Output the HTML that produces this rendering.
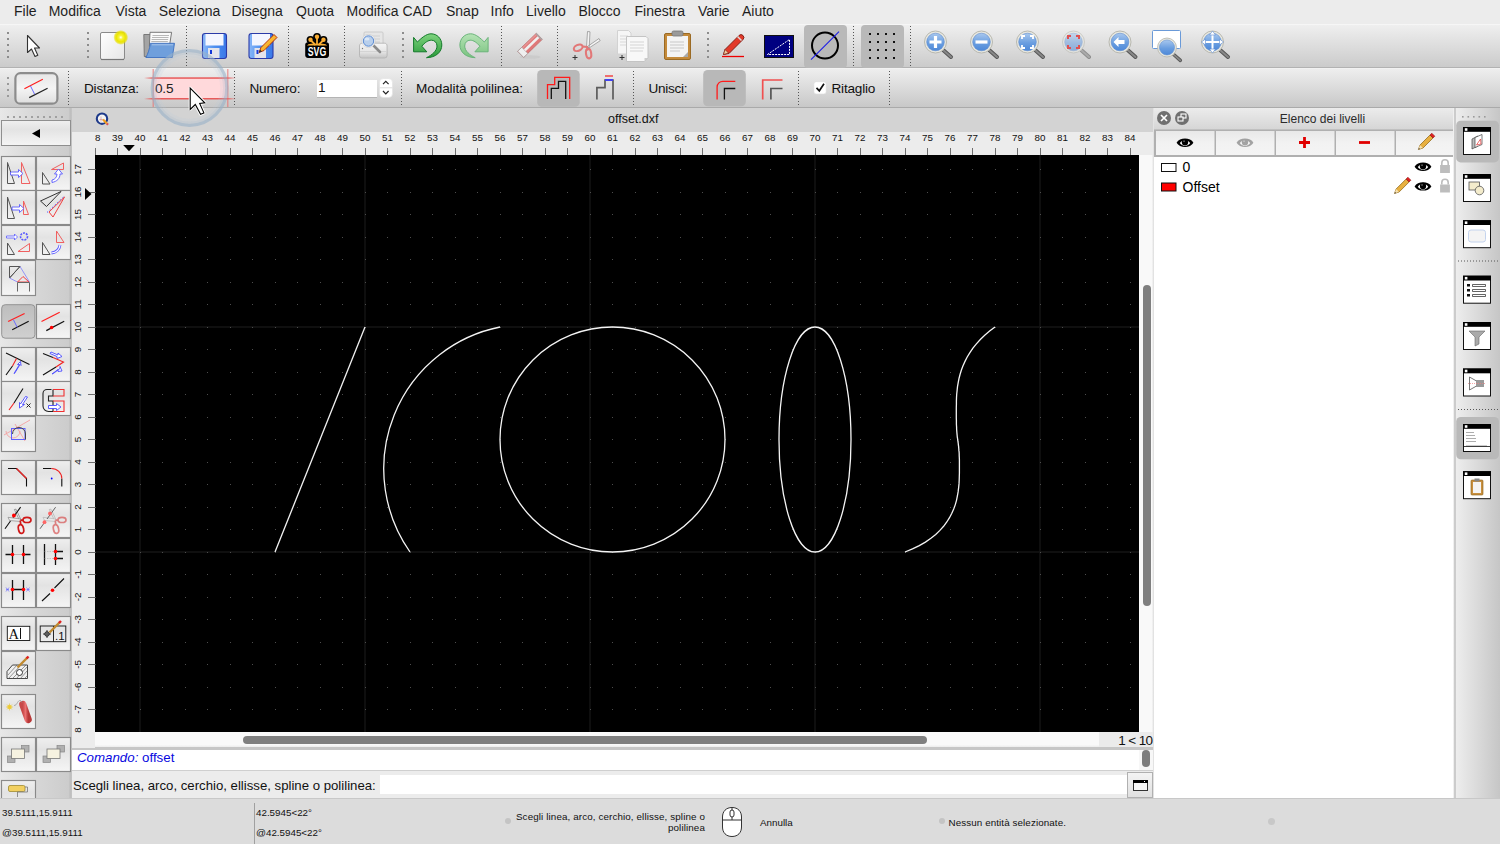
<!DOCTYPE html>
<html><head><meta charset="utf-8"><style>
*{box-sizing:border-box;margin:0;padding:0}
html,body{width:1500px;height:844px;overflow:hidden;white-space:nowrap;background:#dcdcdc;font-family:"Liberation Sans",sans-serif;color:#1a1a1a}
.abs{position:absolute}
svg{display:block}
#menubar{left:0;top:0;width:1500px;height:24px;background:#ececec;font-size:14px;color:#1e1e1e}
#menubar span{position:absolute;top:3px}
#tb1{left:0;top:24px;width:1500px;height:44px;background:linear-gradient(#efefef,#cbcbcb);border-top:1px solid #f6f6f6;border-bottom:1px solid #b2b2b2}
#tb2{left:0;top:68px;width:1500px;height:40px;background:linear-gradient(#eeeeee,#c8c8c8);border-top:1px solid #f2f2f2;border-bottom:1px solid #aaaaaa;font-size:14px}
#toolbox{left:0;top:108px;width:72px;height:690px;background:linear-gradient(90deg,#e8e8e8 0,#d8d8d8 45%,#cccccc 96%,#bdbdbd 97%,#c4c4c4 100%)}
#doctitle{left:72px;top:108px;width:1081px;height:24px;background:#d3d3d3;font-size:12px;text-align:center;line-height:23px;color:#222}
#rulerT{left:72px;top:132px;width:1081px;height:23px;background:#ececec}
#rulerL{left:72px;top:155px;width:23px;height:593px;z-index:2;background:#ececec}
#canvas{left:95px;top:155px;width:1044px;height:577px;background:#000}
#vscroll{left:1139px;top:155px;width:16px;height:577px;background:linear-gradient(90deg,#f9f9f9 0,#f9f9f9 13px,#e6e6e6 14px,#cfcfcf 16px)}
#hscroll{left:72px;top:732px;width:1081px;height:15px;background:linear-gradient(#f9f9f9 85%,#ececec)}
#cmdhist{left:72px;top:747px;width:1081px;height:24px;background:#fff;border-top:3px solid #c6c6c6;border-bottom:1px solid #cfcfcf}
#cmdline{left:72px;top:771px;width:1081px;height:27px;background:#ececec}
#layers{left:1155px;top:108px;width:298px;height:690px;background:#fff}
#dock{left:1453px;top:108px;width:47px;height:690px;background:linear-gradient(90deg,#ececec,#d0d0d0)}
#status{left:0;top:798px;width:1500px;height:46px;background:#dcdcdc;border-top:1px solid #c8c8c8}

</style></head><body>
<div id="menubar" class="abs"><span style="left:14px">File</span><span style="left:48.7px">Modifica</span><span style="left:115.5px">Vista</span><span style="left:158.8px">Seleziona</span><span style="left:231.5px">Disegna</span><span style="left:296px">Quota</span><span style="left:346.5px">Modifica CAD</span><span style="left:446px">Snap</span><span style="left:490.5px">Info</span><span style="left:526px">Livello</span><span style="left:578.5px">Blocco</span><span style="left:634.5px">Finestra</span><span style="left:698px">Varie</span><span style="left:742px">Aiuto</span></div>
<div id="tb1" class="abs"><svg width="1500" height="47" viewBox="0 22 1500 47" style="position:absolute;left:0;top:-3px">
<defs>
<linearGradient id="gBlue" x1="0" y1="0" x2="1" y2="0"><stop offset="0" stop-color="#8ab8f8"/><stop offset=".5" stop-color="#4d8ff0"/><stop offset="1" stop-color="#3a78e8"/></linearGradient>
<linearGradient id="gLens" x1="0" y1="0" x2="0" y2="1"><stop offset="0" stop-color="#a9c8ee"/><stop offset=".55" stop-color="#6a9ee0"/><stop offset="1" stop-color="#4d88d8"/></linearGradient>
<linearGradient id="gPage" x1="0" y1="0" x2="1" y2="1"><stop offset="0" stop-color="#ffffff"/><stop offset="1" stop-color="#e6e6e6"/></linearGradient>
<radialGradient id="gSun"><stop offset="0" stop-color="#ffffff"/><stop offset=".25" stop-color="#f8f440"/><stop offset=".6" stop-color="#ece600"/><stop offset=".8" stop-color="#e8e000" stop-opacity=".75"/><stop offset="1" stop-color="#e8e000" stop-opacity="0"/></radialGradient>
<linearGradient id="gGreen" x1="0" y1="0" x2="0" y2="1"><stop offset="0" stop-color="#7fd47f"/><stop offset="1" stop-color="#2a9a3a"/></linearGradient>
<linearGradient id="gGreenL" x1="0" y1="0" x2="0" y2="1"><stop offset="0" stop-color="#b6e3b6"/><stop offset="1" stop-color="#78c27e"/></linearGradient>
<linearGradient id="gPencil" x1="0" y1="0" x2="1" y2="1"><stop offset="0" stop-color="#ffe060"/><stop offset="1" stop-color="#f08a00"/></linearGradient>
</defs>
<!-- handles -->
<g fill="#8c8c8c"><rect x="7" y="32" width="2" height="2"/><rect x="7" y="38" width="2" height="2"/><rect x="7" y="44" width="2" height="2"/><rect x="7" y="50" width="2" height="2"/><rect x="7" y="56" width="2" height="2"/>
<rect x="87" y="32" width="2" height="2"/><rect x="87" y="38" width="2" height="2"/><rect x="87" y="44" width="2" height="2"/><rect x="87" y="50" width="2" height="2"/><rect x="87" y="56" width="2" height="2"/>
<rect x="402" y="32" width="2" height="2"/><rect x="402" y="38" width="2" height="2"/><rect x="402" y="44" width="2" height="2"/><rect x="402" y="50" width="2" height="2"/><rect x="402" y="56" width="2" height="2"/>
<rect x="707" y="32" width="2" height="2"/><rect x="707" y="38" width="2" height="2"/><rect x="707" y="44" width="2" height="2"/><rect x="707" y="50" width="2" height="2"/><rect x="707" y="56" width="2" height="2"/></g>
<!-- separators -->
<g stroke="#555" stroke-width="1" stroke-dasharray="1 2"><path d="M186.5 26V66M288.5 26V66M344.5 26V66M557.5 26V66M501.5 26V66M853.5 26V66M910.5 26V66"/></g>
<!-- arrow -->
<path d="M27.5 35.5V52.5L31.5 49L35 56.5L37.8 55.2L34.5 48H39.5Z" fill="#fff" stroke="#333" stroke-width="1.1" stroke-linejoin="round"/>
<!-- new doc -->
<rect x="100.5" y="32.5" width="24" height="27" rx="1.5" fill="url(#gPage)" stroke="#8a8a8a"/>
<path d="M101 59.5h23" stroke="#777" stroke-width="1.2"/>
<circle cx="120.8" cy="37.4" r="7.5" fill="url(#gSun)"/>
<!-- open folder -->
<path d="M143.8 34.5h6l1 1.5v20.5h-6.5z" fill="#a4a4a4" stroke="#707070" stroke-width=".9"/>
<path d="M150 32.3h21.6l-2.2 14h-20z" fill="#fafafa" stroke="#6a6a6a" stroke-width=".9"/>
<path d="M152.5 35.5h16.5M152 37.5h16.5M151.6 39.5h16.5M151.3 41.5h16.5" stroke="#b8b8b8" stroke-width="1.1"/>
<path d="M150.5 43.3h24l-2.2 14.2h-26.5c2-3 3.8-9 4.7-14.2z" fill="#6f9fdc" stroke="#3d6fbf" stroke-width=".9"/>
<path d="M152 44.8h21" stroke="#a8c6ec" stroke-width="1"/>
<!-- save -->
<g id="floppy"><rect x="202.5" y="33.5" width="24" height="25" rx="2.5" fill="url(#gBlue)" stroke="#2b3aa8" stroke-width="1.1"/>
<rect x="205.5" y="34" width="18" height="11.5" fill="#f4f6ff"/>
<rect x="208" y="48" width="11.5" height="10" fill="#e4e4ec"/>
<rect x="210" y="50" width="2" height="4" fill="#1438d8"/></g>
<!-- save as -->
<use href="#floppy" x="46.5"/>
<path d="M259 52.5l2-5 13-13 3 3-13 13z" fill="url(#gPencil)" stroke="#b02000" stroke-width=".9"/>
<path d="M259 52.5l1-3 2 2z" fill="#333"/>
<!-- SVG logo -->
<g><rect x="305.2" y="42.3" width="23.8" height="15.6" rx="2.8" fill="#000"/>
<circle cx="317" cy="36.8" r="3.9" fill="#000"/><circle cx="310.5" cy="39.8" r="3.9" fill="#000"/><circle cx="323.5" cy="39.8" r="3.9" fill="#000"/>
<path d="M317 37v7M310.5 40l5 5M323.5 40l-5 5" stroke="#000" stroke-width="5"/>
<path d="M317 37v7.5M310.5 40l5 5M323.5 40l-5 5" stroke="#f9ad33" stroke-width="1.8"/>
<circle cx="317" cy="36.8" r="2.2" fill="#f9ad33"/><circle cx="310.5" cy="39.8" r="2.2" fill="#f9ad33"/><circle cx="323.5" cy="39.8" r="2.2" fill="#f9ad33"/>
<path d="M307 45.6Q308 43.6 312 43.8H322Q326 43.6 327.2 45.6Z" fill="#f9ad33"/>
<text x="317" y="56.2" font-family="Liberation Sans" font-weight="bold" font-size="12" fill="#fff" text-anchor="middle" textLength="18.5" lengthAdjust="spacingAndGlyphs">SVG</text></g>
<!-- print preview -->
<rect x="364" y="32" width="19" height="14" rx="1" fill="#e6e6e6" stroke="#c4c4c4" stroke-width=".8"/>
<path d="M367 36h13M367 39h13M367 42h13" stroke="#d0d0d0"/>
<defs><linearGradient id="gPrn" x1="0" y1="0" x2="0" y2="1"><stop offset="0" stop-color="#f6f6f6"/><stop offset=".6" stop-color="#e4e4e4"/><stop offset="1" stop-color="#c4c4c4"/></linearGradient></defs>
<path d="M359.5 46c0-1.8 1-2.8 2.8-2.8h22c1.8 0 2.8 1 2.8 2.8v9.5a2.5 2.5 0 0 1-2.5 2.5h-22.6a2.5 2.5 0 0 1-2.5-2.5z" fill="url(#gPrn)" stroke="#b4b4b4" stroke-width=".9"/>
<path d="M360 51.5h26.5" stroke="#cfcfcf" stroke-width=".8"/><circle cx="362.5" cy="48.5" r=".7" fill="#777"/>
<path d="M373.5 45.5l6.5 6.5" stroke="#8a8a8a" stroke-width="2.6" stroke-linecap="round"/>
<circle cx="368.5" cy="41" r="6.6" fill="#f8f8f8" stroke="#c8c8c8" stroke-width=".6"/>
<circle cx="368.5" cy="41" r="5.2" fill="#b8cfec" stroke="#5a8ad2" stroke-width="1"/>
<ellipse cx="367" cy="39" rx="2.5" ry="1.6" fill="#e4eefa" opacity=".8"/>
<!-- undo -->
<path d="M413.6 37.4L417.4 42C421 38.5 426 33.8 431 33.8C437 33.8 441.8 38.5 441.8 45C441.8 52 436 57.5 426.5 57.7C432 55 437 51 437 46C437 42.5 434.5 40.2 431.5 40.2C428 40.2 425 42.5 421.8 46.2L426.8 51.8L413.6 51.8Z" fill="url(#gGreen)" stroke="#137a2a" stroke-width="1"/>
<!-- redo -->
<path d="M413.6 37.4L417.4 42C421 38.5 426 33.8 431 33.8C437 33.8 441.8 38.5 441.8 45C441.8 52 436 57.5 426.5 57.7C432 55 437 51 437 46C437 42.5 434.5 40.2 431.5 40.2C428 40.2 425 42.5 421.8 46.2L426.8 51.8L413.6 51.8Z" fill="url(#gGreenL)" stroke="#6ab47a" stroke-width="1" transform="translate(901.7 0) scale(-1 1)"/>
<!-- eraser -->
<ellipse cx="530" cy="57" rx="10.5" ry="1.8" fill="#c8c8c8" opacity=".7"/>
<g transform="translate(530 45.3) rotate(-44)">
<rect x="-13" y="-4.3" width="26" height="8.6" fill="#e07878" stroke="#b86060" stroke-width=".6"/>
<rect x="-13" y="-4.3" width="5.8" height="8.6" fill="#efefef" stroke="#999" stroke-width=".6"/>
<rect x="-7.2" y="-1.3" width="19" height="2.6" fill="#f0f0f0"/>
<rect x="-7.2" y="-4" width="19" height="1.5" fill="#eaa0a0" opacity=".7"/>
<rect x="11.8" y="-4.3" width="1.4" height="8.6" fill="#a8a8a8"/>
</g>
<!-- cut -->
<path d="M586.5 47.5L587.5 31.5l2.5.3-.8 15.5zM587.5 46.5l11.5-8 1.2 2.2-11.5 7.5z" fill="#f4f4f4" stroke="#8a8a8a" stroke-width=".7"/>
<ellipse cx="578.2" cy="47.8" rx="4.6" ry="2.9" fill="none" stroke="#e27878" stroke-width="2.1" transform="rotate(-25 578.2 47.8)"/>
<ellipse cx="588.6" cy="53.6" rx="2.6" ry="4.8" fill="none" stroke="#e27878" stroke-width="2.1" transform="rotate(-8 588.6 53.6)"/>
<path d="M582.5 46.5l4.5.5.8 3.5" stroke="#e27878" stroke-width="2" fill="none"/>
<path d="M572.5 57.5h5M575 55v5" stroke="#333" stroke-width="1"/>
<!-- copy -->
<path d="M617.5 30.5h11l2.5 2.5v21h-13.5z" fill="#f6f6f6" stroke="#d2d2d2"/>
<path d="M620 36h8M620 39h8M620 42h8M620 45h8" stroke="#d8d8d8"/>
<path d="M626.5 36.5h19.5l2 2v19.5l-3.5 3.5h-18z" fill="#f8f8f8" stroke="#c4c4c4"/>
<path d="M630 42h14M630 45h14M630 48h14M630 51h13" stroke="#d4d4d4"/>
<path d="M644.5 61.5v-3.5h3.5z" fill="#ccc"/>
<path d="M619.5 57.5h5M622 55v5" stroke="#333" stroke-width="1"/>
<!-- paste -->
<rect x="664.5" y="33.5" width="26" height="26" rx="1.5" fill="#c48a3a" stroke="#9a6a24"/>
<rect x="667" y="36" width="21" height="21" fill="#f4f4f4"/>
<path d="M670 42h14M670 45h14M670 48h14M670 51h10" stroke="#c8c8c8"/>
<path d="M683 57l5-5v5z" fill="#aaa"/>
<rect x="672" y="31" width="11" height="5" rx="1.5" fill="#9a9a9a" stroke="#777" stroke-width=".8"/>
<!-- pencil -->
<path d="M722 56.5h22" stroke="#e00" stroke-width="1.3"/>
<path d="M723.5 54.5l1.5-5 14-14a2.5 2.5 0 0 1 4 4l-14 14z" fill="#e23a2a" stroke="#7a1a10" stroke-width=".9"/>
<path d="M737.5 36.5l4 4" stroke="#ddd" stroke-width="1.5"/>
<path d="M723.5 54.5l1.5-5 3.5 3.5z" fill="#f0d0a0" stroke="#7a1a10" stroke-width=".6"/>
<!-- blue box -->
<rect x="764.5" y="35.5" width="29" height="22" fill="#000080" stroke="#111"/>
<path d="M767.5 54.5L789.5 39.5V54.5Z" fill="none" stroke="#fff" stroke-width="1" stroke-dasharray="2 1"/>
<!-- selected circle btn -->
<rect x="804" y="25" width="43" height="43" rx="4" fill="#b9b9b9"/>
<circle cx="825" cy="45.6" r="13" fill="none" stroke="#000" stroke-width="2"/>
<path d="M811 59.6L839 31.6" stroke="#1b1be8" stroke-width="1.1"/>
<!-- grid btn -->
<rect x="861" y="25" width="43" height="43" rx="4" fill="#b9b9b9"/>
<g fill="#111"><rect x="869" y="33" width="2" height="2"/><rect x="877" y="33" width="2" height="2"/><rect x="885" y="33" width="2" height="2"/><rect x="893" y="33" width="2" height="2"/><rect x="869" y="41" width="2" height="2"/><rect x="877" y="41" width="2" height="2"/><rect x="885" y="41" width="2" height="2"/><rect x="893" y="41" width="2" height="2"/><rect x="869" y="49" width="2" height="2"/><rect x="877" y="49" width="2" height="2"/><rect x="885" y="49" width="2" height="2"/><rect x="893" y="49" width="2" height="2"/><rect x="869" y="57" width="2" height="2"/><rect x="877" y="57" width="2" height="2"/><rect x="885" y="57" width="2" height="2"/><rect x="893" y="57" width="2" height="2"/></g>
<!-- zoom icons -->
<g id="zlens"><path d="M942 49l9 8" stroke="#555" stroke-width="4" stroke-linecap="round"/><path d="M942 49l9 8" stroke="#888" stroke-width="2" stroke-linecap="round"/>
<circle cx="935.5" cy="42" r="11" fill="#e8e8e0" stroke="#b8b8b0" stroke-width="1"/><circle cx="935.5" cy="42" r="8.8" fill="url(#gLens)" stroke="#5a8ad0" stroke-width=".6"/></g>
<path d="M935.5 36v12M929.5 42h12" stroke="#fff" stroke-width="3.2"/>
<use href="#zlens" x="46"/>
<path d="M975.5 42h12" stroke="#fff" stroke-width="3.2"/>
<use href="#zlens" x="92"/>
<path d="M1022 39v-3h3M1030 36h3v3M1033 45v3h-3M1025 48h-3v-3" stroke="#fff" stroke-width="1.8" fill="none"/>
<g opacity=".55"><use href="#zlens" x="138"/></g>
<path d="M1068 39v-3h3M1076 36h3v3M1079 45v3h-3M1071 48h-3v-3" stroke="#e05050" stroke-width="2" fill="none"/>
<use href="#zlens" x="184.5"/>
<path d="M1113.5 42l5-5v3h6v4h-6v3z" fill="#fff"/>
<rect x="1152.5" y="30.5" width="28" height="18" rx="1" fill="#fff" stroke="#6a9ad8"/>
<use href="#zlens" transform="translate(1167 47.5) scale(.86) translate(-935.5 -42)"/>
<use href="#zlens" x="277" y="0"/>
<path d="M1212.5 32v20M1202.5 42h20" stroke="#fff" stroke-width="2"/>
<path d="M1212.5 31l-3 4h6zM1212.5 53l-3-4h6zM1201.5 42l4-3v6zM1223.5 42l-4-3v6z" fill="#fff" stroke="#5a8ad0" stroke-width=".6"/>
</svg></div>
<div id="tb2" class="abs"><div id="tb2in" class="abs" style="left:0;top:0"><svg width="1500" height="39" viewBox="0 69 1500 39" style="position:absolute;left:0;top:0">
<defs>
<linearGradient id="gBtn" x1="0" y1="0" x2="0" y2="1"><stop offset="0" stop-color="#e6e6e6"/><stop offset=".5" stop-color="#f4f4f4"/><stop offset="1" stop-color="#dedede"/></linearGradient>
<radialGradient id="gRing" cx=".5" cy=".5" r=".5"><stop offset=".82" stop-color="#c8d6e4" stop-opacity="0"/><stop offset=".9" stop-color="#a9bfd6" stop-opacity=".55"/><stop offset=".96" stop-color="#9db5cf" stop-opacity=".8"/><stop offset="1" stop-color="#9db5cf" stop-opacity="0"/></radialGradient>
</defs>
<g fill="#9a9a9a"><rect x="7" y="77" width="2" height="2"/><rect x="7" y="83" width="2" height="2"/><rect x="7" y="89" width="2" height="2"/><rect x="7" y="95" width="2" height="2"/></g>
<rect x="15.4" y="73.2" width="42" height="30.5" rx="5" fill="url(#gBtn)" stroke="#8c8c8c" stroke-width="2.2"/>
<path d="M24.4 88.8L42.8 79.2" stroke="#ff1a1a" stroke-width="1.2"/>
<path d="M29.2 97.6L47.6 88.2" stroke="#222" stroke-width="1.2"/>
<path d="M30.4 85.8L34.6 94.2" stroke="#6a6aff" stroke-width="1"/>
<g stroke="#555" stroke-width="1" stroke-dasharray="1 2"><path d="M68.5 71V106M234.5 71V106M401.5 71V106M633.5 71V106M798.5 71V106M889.5 71V106"/></g>
</svg>
<span class="abs" style="left:84px;top:12.4px;font-size:13.6px;letter-spacing:-.2px;color:#111">Distanza:</span>
<div class="abs" style="left:153px;top:9px;width:75px;height:21px;background:#ffd9db"></div>
<svg class="abs" style="left:0;top:0" width="300" height="39" viewBox="0 69 300 39">
<defs><linearGradient id="gFadeH" x1="0" x2="1"><stop offset="0" stop-color="#e85a5a" stop-opacity="0"/><stop offset=".1" stop-color="#e85a5a"/><stop offset=".9" stop-color="#e85a5a"/><stop offset="1" stop-color="#e85a5a" stop-opacity="0"/></linearGradient></defs>
<rect x="144" y="77.3" width="92" height="1.5" fill="url(#gFadeH)"/>
<rect x="144" y="98" width="92" height="1.5" fill="url(#gFadeH)"/>
<path d="M153.2 69V107M227.8 69V107" stroke="#e87070" stroke-width="1.2" opacity=".75"/>
</svg>
<span class="abs" style="left:155px;top:12.4px;font-size:13.6px;letter-spacing:-.2px;color:#222">0.5</span>
<span class="abs" style="left:249.5px;top:12.4px;font-size:13.6px;letter-spacing:-.2px;color:#111">Numero:</span>
<div class="abs" style="left:317px;top:11px;width:60px;height:16.5px;background:#fff;box-shadow:0 1px 0 #b4b4b4"></div>
<span class="abs" style="left:318px;top:11.4px;font-size:13.6px;color:#111">1</span>
<svg class="abs" style="left:379px;top:9px" width="14" height="20"><rect x=".5" y=".5" width="13" height="19" rx="4" fill="#fff" stroke="#e0e0e0" stroke-width=".6"/><path d="M.5 9.8h13" stroke="#ddd"/><path d="M4 6.2L6.8 3.4 9.6 6.2M4 13L6.8 15.8 9.6 13" fill="none" stroke="#222" stroke-width="1.2"/></svg>
<span class="abs" style="left:416px;top:12.4px;font-size:13.6px;letter-spacing:-.1px;color:#111">Modalità polilinea:</span>
<span class="abs" style="left:648.5px;top:12.4px;font-size:13.6px;letter-spacing:-.3px;color:#111">Unisci:</span>
<span class="abs" style="left:831.5px;top:12.4px;font-size:13.6px;letter-spacing:-.2px;color:#111">Ritaglio</span>
<svg class="abs" style="left:0;top:0" width="1500" height="39" viewBox="0 69 1500 39">
<rect x="537.2" y="70" width="42.5" height="36.7" rx="4.5" fill="#b8b8b8"/>
<path d="M547.5 99V84.7H554.7V77.3H569.7V99" fill="none" stroke="#ff1a1a" stroke-width="1.3"/>
<path d="M551.3 99V88.3H558.5V81.3H565.7V99" fill="none" stroke="#111" stroke-width="1.3"/>
<path d="M596.9 99.5V87.7H605V80H613V99.5" fill="none" stroke="#5c5c5c" stroke-width="1.7"/>
<path d="M605 80H613" stroke="#3b3bff" stroke-width="1.8"/>
<path d="M605 76H613" stroke="#f05050" stroke-width="1.6"/>
<rect x="703.2" y="70" width="42.6" height="36.3" rx="4.5" fill="#b8b8b8"/>
<path d="M717.1 99.4V87A5.7 5.7 0 0 1 723 81.3H735.3" fill="none" stroke="#ff1a1a" stroke-width="1.3"/>
<path d="M724.4 99.4V88.5H735.3" fill="none" stroke="#111" stroke-width="1.3"/>
<path d="M762.7 99.4V80H782.5" fill="none" stroke="#f05050" stroke-width="1.7"/>
<path d="M770.9 99.4V88.5H782.5" fill="none" stroke="#555" stroke-width="1.7"/>
<rect x="813.9" y="81.7" width="12.3" height="12.3" rx="2.5" fill="#fff" stroke="#dcdcdc" stroke-width=".6"/>
<path d="M816.5 87.8L819.3 90.8 824 83.8" fill="none" stroke="#111" stroke-width="1.7"/>
</svg>
</div></div>
<div id="toolbox" class="abs"><svg width="72" height="690" viewBox="0 108 72 690" style="position:absolute;left:0;top:0">
<defs><linearGradient id="gTb" x1="0" y1="0" x2="0" y2="1"><stop offset="0" stop-color="#efefef"/><stop offset=".35" stop-color="#e3e3e3"/><stop offset="1" stop-color="#f5f5f5"/></linearGradient>
<linearGradient id="gTbS" x1="0" y1="0" x2="0" y2="1"><stop offset="0" stop-color="#bdbdbd"/><stop offset="1" stop-color="#d0d0d0"/></linearGradient>
<linearGradient id="gDyn" x1="0" y1="0" x2="1" y2="0"><stop offset="0" stop-color="#c84848"/><stop offset=".5" stop-color="#ea7070"/><stop offset="1" stop-color="#b83838"/></linearGradient></defs>
<g fill="#a0a0a0"><rect x="7" y="116" width="2" height="2"/><rect x="13" y="116" width="2" height="2"/><rect x="19" y="116" width="2" height="2"/><rect x="25" y="116" width="2" height="2"/><rect x="31" y="116" width="2" height="2"/><rect x="37" y="116" width="2" height="2"/><rect x="43" y="116" width="2" height="2"/><rect x="49" y="116" width="2" height="2"/><rect x="55" y="116" width="2" height="2"/><rect x="61" y="116" width="2" height="2"/></g>
<rect x="1.5" y="120.5" width="69" height="25" fill="url(#gTb)" stroke="#8f8f8f"/>
<path d="M32 133.5l8-4.5v9z" fill="#000"/>
<rect x="1.5" y="156.5" width="34.0" height="34.0" fill="url(#gTb)" stroke="#8a8a8a" stroke-width="1.15"/>
<rect x="36.5" y="156.5" width="34.0" height="34.0" fill="url(#gTb)" stroke="#8a8a8a" stroke-width="1.15"/>
<rect x="1.5" y="190.5" width="34.0" height="34.0" fill="url(#gTb)" stroke="#8a8a8a" stroke-width="1.15"/>
<rect x="36.5" y="190.5" width="34.0" height="34.0" fill="url(#gTb)" stroke="#8a8a8a" stroke-width="1.15"/>
<rect x="1.5" y="225.5" width="34.0" height="34.0" fill="url(#gTb)" stroke="#8a8a8a" stroke-width="1.15"/>
<rect x="36.5" y="225.5" width="34.0" height="34.0" fill="url(#gTb)" stroke="#8a8a8a" stroke-width="1.15"/>
<rect x="1.5" y="260.5" width="34.0" height="35.0" fill="url(#gTb)" stroke="#8a8a8a" stroke-width="1.15"/>
<rect x="1.7000000000000002" y="304.7" width="33.2" height="33.500000000000014" rx="3.5" fill="url(#gTbS)" stroke="#8c8c8c" stroke-width=".9"/>
<rect x="36.5" y="304.5" width="34.0" height="34.0" fill="url(#gTb)" stroke="#8a8a8a" stroke-width="1.15"/>
<rect x="1.5" y="347.5" width="34.0" height="34.0" fill="url(#gTb)" stroke="#8a8a8a" stroke-width="1.15"/>
<rect x="36.5" y="347.5" width="34.0" height="34.0" fill="url(#gTb)" stroke="#8a8a8a" stroke-width="1.15"/>
<rect x="1.5" y="381.5" width="34.0" height="34.0" fill="url(#gTb)" stroke="#8a8a8a" stroke-width="1.15"/>
<rect x="36.5" y="381.5" width="34.0" height="34.0" fill="url(#gTb)" stroke="#8a8a8a" stroke-width="1.15"/>
<rect x="1.5" y="416.5" width="34.0" height="35.0" fill="url(#gTb)" stroke="#8a8a8a" stroke-width="1.15"/>
<rect x="1.5" y="460.5" width="34.0" height="34.0" fill="url(#gTb)" stroke="#8a8a8a" stroke-width="1.15"/>
<rect x="36.5" y="460.5" width="34.0" height="34.0" fill="url(#gTb)" stroke="#8a8a8a" stroke-width="1.15"/>
<rect x="1.5" y="503.5" width="34.0" height="34.0" fill="url(#gTb)" stroke="#8a8a8a" stroke-width="1.15"/>
<rect x="36.5" y="503.5" width="34.0" height="34.0" fill="url(#gTb)" stroke="#8a8a8a" stroke-width="1.15"/>
<rect x="1.5" y="538.5" width="34.0" height="34.0" fill="url(#gTb)" stroke="#8a8a8a" stroke-width="1.15"/>
<rect x="36.5" y="538.5" width="34.0" height="34.0" fill="url(#gTb)" stroke="#8a8a8a" stroke-width="1.15"/>
<rect x="1.5" y="573.5" width="34.0" height="34.0" fill="url(#gTb)" stroke="#8a8a8a" stroke-width="1.15"/>
<rect x="36.5" y="573.5" width="34.0" height="34.0" fill="url(#gTb)" stroke="#8a8a8a" stroke-width="1.15"/>
<rect x="1.5" y="616.5" width="34.0" height="34.0" fill="url(#gTb)" stroke="#8a8a8a" stroke-width="1.15"/>
<rect x="36.5" y="616.5" width="34.0" height="34.0" fill="url(#gTb)" stroke="#8a8a8a" stroke-width="1.15"/>
<rect x="1.5" y="651.5" width="34.0" height="34.0" fill="url(#gTb)" stroke="#8a8a8a" stroke-width="1.15"/>
<rect x="1.5" y="694.5" width="34.0" height="34.0" fill="url(#gTb)" stroke="#8a8a8a" stroke-width="1.15"/>
<rect x="1.5" y="737.5" width="34.0" height="34.0" fill="url(#gTb)" stroke="#8a8a8a" stroke-width="1.15"/>
<rect x="36.5" y="737.5" width="34.0" height="34.0" fill="url(#gTb)" stroke="#8a8a8a" stroke-width="1.15"/>
<rect x="1.5" y="780.5" width="34.0" height="35.0" fill="url(#gTb)" stroke="#8a8a8a" stroke-width="1.15"/>
<g fill="none" stroke-width="1">
<!-- r1c1 move -->
<path d="M7.5 162.5V183.5H14.5Z" stroke="#555"/><path d="M21.5 162.5V183.5H30Z" stroke="#f06060"/>
<path d="M10.5 172h8v-2.5l4.5 4-4.5 4V175h-8z" stroke="#5a5aff" fill="#fff" stroke-width=".9"/>
<!-- r1c2 rotate -->
<path d="M42.5 172.5V184H50Z" stroke="#555"/><path d="M51.5 169.5L63.5 163V169.5Z" stroke="#f06060"/>
<path d="M52 182.5c5-1 8-4 8-8.5h2.5l-4-5-4 5H57c0 3-2 5.5-5 6z" stroke="#5a5aff" fill="#fff" stroke-width=".9"/>
<!-- r2c1 scale -->
<path d="M7.5 197V218.5H14.5Z" stroke="#555"/><path d="M23.5 201V214.5H28.5Z" stroke="#f06060"/>
<path d="M12 207h7.5v-2.5l4.5 4-4.5 4V210H12z" stroke="#5a5aff" fill="#fff" stroke-width=".9"/>
<!-- r2c2 mirror -->
<path d="M40.5 201l20.5-9.5-14.5 15z" stroke="#333"/><path d="M64.5 197l-11.5 20 -4-5z" stroke="#f04040"/>
<path d="M47 212.5l17-16" stroke="#5a5aff" stroke-dasharray="1.5 2"/>
<!-- r3c1 move rotate -->
<path d="M7.5 243V254.5H14.5Z" stroke="#555"/><path d="M18 251.5L29.5 243.5V251.5Z" stroke="#f06060"/>
<path d="M6.5 236h8v-2l3 3-3 3v-2h-8z" stroke="#5a5aff" fill="#fff" stroke-width=".8"/>
<circle cx="24" cy="236.5" r="3.5" stroke="#5a5aff" stroke-width="1.6" stroke-dasharray="2 1"/>
<!-- r3c2 rotate2 -->
<path d="M42.5 242.5V254.5H50Z" stroke="#555"/><path d="M56.5 231V242.5H64Z" stroke="#f06060"/>
<path d="M51.5 253c4.5-.5 8-3.5 8.5-8" stroke="#5a5aff" stroke-width="2.8"/><path d="M51.5 253c4.5-.5 8-3.5 8.5-8" stroke="#fff" stroke-width="1.2"/>
<!-- r4c1 align -->
<path d="M9.5 266.5H20L9.5 278zM20 266.5L9.5 278" stroke="#555"/>
<path d="M20 266.5L29.5 282M9.5 278L17.5 282" stroke="#7070ff" stroke-width=".7"/>
<path d="M17.5 282L23 276.5 29 282z" stroke="#f04040"/>
<path d="M17.5 282.5V291.5M29.5 282.5V291.5M17.5 282.5H29.5" stroke="#666"/>
<!-- r5c1 offset selected -->
<path d="M8.1 321.5L24.6 313.5" stroke="#ff2020" stroke-width="1.2"/><path d="M12.2 329.7L28.7 321.3" stroke="#111" stroke-width="1.2"/><path d="M13.3 319.5L17.3 327.5" stroke="#6a6aff"/>
<!-- r5c2 offset through -->
<path d="M41.5 321.5L59.7 312.3" stroke="#ff2020" stroke-width="1.2"/><path d="M46.3 330.6L64.2 321.3" stroke="#111" stroke-width="1.2"/><circle cx="51.6" cy="327.5" r="1.8" fill="#f00" stroke="none"/>
<!-- r6c1 trim -->
<path d="M6 353l23.5 11.5" stroke="#111" stroke-width="1.1"/><path d="M6 375l6.5-9" stroke="#111" stroke-width="1.1"/><path d="M12.5 366l4-7.5" stroke="#f02020" stroke-width="1.1"/>
<path d="M14 373.5l5.5-9h-2l3-3 .5 4-1-1-5.5 9z" stroke="#4a4aff" fill="#fff" stroke-width=".9"/>
<!-- r6c2 trim2 -->
<path d="M43 353.5l10 4M43 375l13-8" stroke="#111" stroke-width="1.1"/><path d="M53 357.5l10.5 4.5-7.5 5" stroke="#f02020" stroke-width="1.1"/>
<path d="M51 352l7 3v-2l4 3.5-5 2v-2l-7-3z" stroke="#4a4aff" fill="#fff" stroke-width=".9"/>
<path d="M52 374l6-4.5v2l4-.5-2-4.5v2l-6 4.5z" stroke="#4a4aff" fill="#fff" stroke-width=".9"/>
<!-- r7c1 lengthen -->
<path d="M23 388.5l-9 14.5" stroke="#111" stroke-width="1.1"/><path d="M14 403l-5 7" stroke="#f02020" stroke-width="1.1"/>
<path d="M27.5 397l-5 7.5h2l-5 3.5 0-5.5 1 1.5 5-7.5z" stroke="#4a4aff" fill="#fff" stroke-width=".9"/>
<path d="M26.5 403.5l4 4M30.5 403.5l-4 4" stroke="#222"/>
<!-- r7c2 break-out -->
<path d="M51.5 389.5H47a4 4 0 0 0-4 4V406a5.5 5.5 0 0 0 5.5 5.5H53V401h-4.5v-5H53v-6.5" stroke="#222" stroke-width="1.1"/>
<path d="M53 389.5H64V396H53M53 401H64V411.5H53" stroke="#f03030" stroke-width="1.1"/>
<path d="M48.5 405.5h8v-2l4.5 3.5-4.5 3.5v-2h-8z" stroke="#4a4aff" fill="#fff" stroke-width=".9"/>
<!-- r8c1 stretch -->
<path d="M4 435L30 420M15 424l10 17M6 431a7 7 0 1 0 14 0" stroke="#f4a0a0" stroke-width=".9"/>
<rect x="11.5" y="428.5" width="13.5" height="11" stroke="#6060ff"/>
<path d="M12.5 434a6.5 6.5 0 0 1 13 0v5.5" stroke="#444"/>
<!-- r9 chamfer fillet -->
<path d="M8 468.5H16.5L26.5 478.5V486.5" stroke="#111" stroke-width="1.1"/><path d="M16.5 468.5L26.5 478.5" stroke="#f02020" stroke-width="1.1"/>
<path d="M43 468.5H51.5M61.8 478.5V486.5" stroke="#111" stroke-width="1.1"/><path d="M51.5 468.5A10.3 10 0 0 1 61.8 478.5" stroke="#f02020" stroke-width="1.1"/><circle cx="51.7" cy="478.5" r=".9" fill="#00f" stroke="none"/>
<!-- r10 scissors -->
<g id="scis"><path d="M14.4 509.5l1.6-.3 4.8 10.3-1.4.6z" fill="#f4f4f4" stroke="#666" stroke-width=".6"/>
<path d="M8 517.3l12.6 1.7v2.5l-11-1z" fill="#ececec" stroke="#777" stroke-width=".6"/>
<path d="M20.6 520.2h2.5M20.3 520.5l.4 4" stroke="#d01818" stroke-width="1.7"/>
<ellipse cx="27" cy="519.9" rx="4" ry="2.6" stroke="#d01818" stroke-width="1.7"/>
<ellipse cx="21" cy="529" rx="2.6" ry="4.4" stroke="#d01818" stroke-width="1.7" transform="rotate(-12 21 529)"/></g>
<path d="M5 528.8L10.5 521M13 517.5l7.6-10.3" stroke="#111" stroke-width="1.1"/>
<circle cx="13.9" cy="515.5" r="1.9" fill="#f00" stroke="none"/>
<g opacity=".5"><use href="#scis" x="35"/></g>
<path d="M40 528.8L44.5 522.5M47 519l8.6-11.8" stroke="#555" stroke-width=".9"/>
<circle cx="50" cy="513.5" r="1.9" fill="#f66" stroke="none"/><circle cx="44.5" cy="522.2" r="1.9" fill="#f66" stroke="none"/>
<!-- r11 -->
<path d="M12.5 545V564M23.5 545V564M5.5 554.5H12.5M23.5 554.5H30.5" stroke="#111" stroke-width="1.3"/><path d="M12.5 554.5H23.5" stroke="#999" stroke-width=".6"/>
<circle cx="12.5" cy="554.5" r="1.8" fill="#f00" stroke="none"/><circle cx="23.5" cy="554.5" r="1.8" fill="#f00" stroke="none"/>
<path d="M44.5 544V565M55.5 544V565M55.5 551.5H63M55.5 558.5H63" stroke="#111" stroke-width="1.3"/><path d="M44.5 551.5H55.5M44.5 558.5H55.5" stroke="#aaa" stroke-width=".6" stroke-dasharray="1.5 1"/>
<circle cx="55.5" cy="551.5" r="1.8" fill="#f00" stroke="none"/><circle cx="55.5" cy="558.5" r="1.8" fill="#f00" stroke="none"/>
<!-- r12 -->
<path d="M12.5 580V600M23.5 580V600M12.5 589.5H23.5" stroke="#111" stroke-width="1.3"/>
<circle cx="12.5" cy="589.5" r="1.8" fill="#f00" stroke="none"/><circle cx="23.5" cy="589.5" r="1.8" fill="#f00" stroke="none"/>
<path d="M6 587.5l3 4M9 587.5l-3 4M6 589.5h3M26.5 587.5l3 4M29.5 587.5l-3 4M26.5 589.5h3" stroke="#6a6aff" stroke-width=".7"/>
<path d="M42 601L50 593.5M54.5 588L64 578.5" stroke="#111" stroke-width="1.1"/><circle cx="52.5" cy="590.3" r="1.8" fill="#f00" stroke="none"/>
<!-- r13 text, dim -->
<rect x="7.3" y="626.3" width="22.5" height="14.2" fill="#fff" stroke="#111" stroke-width=".9"/>
<text x="8.5" y="639" font-family="Liberation Serif" font-size="14.5" fill="#111" stroke="none">A</text><path d="M20.5 628V639" stroke="#111" stroke-width="1"/>
<rect x="40.2" y="626" width="25.6" height="15.7" stroke="#111" stroke-width=".9"/><path d="M53.5 626V641.7" stroke="#111" stroke-width=".9"/>
<circle cx="47" cy="634" r="2.2" stroke="#111" stroke-width="1"/><path d="M43 634h8M47 630v8" stroke="#111" stroke-width=".8"/>
<text x="55" y="639.5" font-family="Liberation Sans" font-size="11.5" fill="#111" stroke="none">.1</text>
<path d="M49.5 632.5l10.5-10.5" stroke="#c08a30" stroke-width="2.4"/><path d="M59 623l2-2" stroke="#e02020" stroke-width="2.4"/>
<!-- r14 hatch -->
<path d="M7 678.5V671.5L12.5 665H27.5V678.5Z" fill="#f0f0f0" stroke="#333" stroke-width=".9"/>
<path d="M8 675l9-10M8 679l13-14M12 679l14-14M16 679l11-12M20 679l7-8M24 679l3-3" stroke="#555" stroke-width=".6"/>
<circle cx="19.5" cy="672.5" r="3" fill="#fff" stroke="#222" stroke-width=".9"/>
<path d="M17.5 667.5l10-10" stroke="#c08a30" stroke-width="2.4"/><path d="M26.5 658.5l2-2" stroke="#e02020" stroke-width="2.4"/>
<!-- r15 dynamite -->
<path d="M22.8 704.5L28.2 719.5" stroke="url(#gDyn)" stroke-width="7.2" stroke-linecap="round"/>
<path d="M22 702.5c-1-3-3-2.5-4.5 0-1 2-2 3-3.5 3" stroke="#999" stroke-width=".8"/>
<circle cx="9.5" cy="707" r="2.2" fill="#f4d040" stroke="none"/><path d="M6 707h7M9.5 703.5v7M7 704.5l5 5M12 704.5l-5 5" stroke="#e8c838" stroke-width=".6"/>
<!-- r16 blocks -->
<rect x="21.5" y="745.5" width="7.5" height="6.5" fill="#b0b0b0" stroke="#888" stroke-width=".7"/>
<rect x="7.5" y="756" width="7.5" height="6.5" fill="#b0b0b0" stroke="#888" stroke-width=".7"/>
<rect x="11.5" y="749" width="13" height="9.5" fill="#f6f2e0" stroke="#777" stroke-width=".8"/>
<rect x="57" y="745.5" width="7.5" height="6.5" fill="#b0b0b0" stroke="#888" stroke-width=".7"/>
<rect x="43" y="756" width="7.5" height="6.5" fill="#b0b0b0" stroke="#888" stroke-width=".7"/>
<rect x="47" y="749" width="13" height="9.5" fill="#f6f2e0" stroke="#777" stroke-width=".8"/>
<!-- r17 roller -->
<rect x="8.5" y="785.5" width="16.5" height="6" rx="1.5" fill="#f2d060" stroke="#a08a30" stroke-width=".8"/>
<path d="M25 787h2.5v5h-10v5" stroke="#777" stroke-width=".8"/>
</g>

</svg></div>
<div id="doctitle" class="abs"><svg class="abs" style="left:23px;top:3px" width="16" height="16" viewBox="0 0 16 16"><circle cx="7" cy="7.7" r="5.2" fill="#f4f4f4" stroke="#1e3a8a" stroke-width="2.1"/><path d="M4.5 8.5h4M6 5.5v5" stroke="#c88" stroke-width=".6"/><path d="M8 8.5l3.8 4" stroke="#f0a020" stroke-width="2.2"/><path d="M11.8 12.5l1.2 1.3" stroke="#e05050" stroke-width="2.2"/></svg><span class="abs" style="left:536px;top:0px;font-size:12.5px;line-height:23px;color:#111">offset.dxf</span></div>
<div id="rulerT" class="abs"><svg width="1081" height="23" style="position:absolute;left:0;top:0"><path d="M23.5 16v7M45.5 16v7M68.5 16v7M90.5 16v7M113.5 16v7M135.5 16v7M158.5 16v7M180.5 16v7M203.5 16v7M225.5 16v7M248.5 16v7M270.5 16v7M293.5 16v7M315.5 16v7M338.5 16v7M360.5 16v7M383.5 16v7M405.5 16v7M428.5 16v7M450.5 16v7M473.5 16v7M495.5 16v7M518.5 16v7M540.5 16v7M563.5 16v7M585.5 16v7M608.5 16v7M630.5 16v7M653.5 16v7M675.5 16v7M698.5 16v7M720.5 16v7M743.5 16v7M765.5 16v7M788.5 16v7M810.5 16v7M833.5 16v7M855.5 16v7M878.5 16v7M900.5 16v7M923.5 16v7M945.5 16v7M968.5 16v7M990.5 16v7M1013.5 16v7M1035.5 16v7M1058.5 16v7" stroke="#6e6e6e" stroke-width="1"/><svg x="23" y="0" width="1044" height="23" overflow="hidden"><g transform="translate(-23 0)" font-size="9.8" fill="#111"><text x="23.0" y="8.7" text-anchor="middle">38</text><text x="45.5" y="8.7" text-anchor="middle">39</text><text x="68.0" y="8.7" text-anchor="middle">40</text><text x="90.5" y="8.7" text-anchor="middle">41</text><text x="113.0" y="8.7" text-anchor="middle">42</text><text x="135.5" y="8.7" text-anchor="middle">43</text><text x="158.0" y="8.7" text-anchor="middle">44</text><text x="180.5" y="8.7" text-anchor="middle">45</text><text x="203.0" y="8.7" text-anchor="middle">46</text><text x="225.5" y="8.7" text-anchor="middle">47</text><text x="248.0" y="8.7" text-anchor="middle">48</text><text x="270.5" y="8.7" text-anchor="middle">49</text><text x="293.0" y="8.7" text-anchor="middle">50</text><text x="315.5" y="8.7" text-anchor="middle">51</text><text x="338.0" y="8.7" text-anchor="middle">52</text><text x="360.5" y="8.7" text-anchor="middle">53</text><text x="383.0" y="8.7" text-anchor="middle">54</text><text x="405.5" y="8.7" text-anchor="middle">55</text><text x="428.0" y="8.7" text-anchor="middle">56</text><text x="450.5" y="8.7" text-anchor="middle">57</text><text x="473.0" y="8.7" text-anchor="middle">58</text><text x="495.5" y="8.7" text-anchor="middle">59</text><text x="518.0" y="8.7" text-anchor="middle">60</text><text x="540.5" y="8.7" text-anchor="middle">61</text><text x="563.0" y="8.7" text-anchor="middle">62</text><text x="585.5" y="8.7" text-anchor="middle">63</text><text x="608.0" y="8.7" text-anchor="middle">64</text><text x="630.5" y="8.7" text-anchor="middle">65</text><text x="653.0" y="8.7" text-anchor="middle">66</text><text x="675.5" y="8.7" text-anchor="middle">67</text><text x="698.0" y="8.7" text-anchor="middle">68</text><text x="720.5" y="8.7" text-anchor="middle">69</text><text x="743.0" y="8.7" text-anchor="middle">70</text><text x="765.5" y="8.7" text-anchor="middle">71</text><text x="788.0" y="8.7" text-anchor="middle">72</text><text x="810.5" y="8.7" text-anchor="middle">73</text><text x="833.0" y="8.7" text-anchor="middle">74</text><text x="855.5" y="8.7" text-anchor="middle">75</text><text x="878.0" y="8.7" text-anchor="middle">76</text><text x="900.5" y="8.7" text-anchor="middle">77</text><text x="923.0" y="8.7" text-anchor="middle">78</text><text x="945.5" y="8.7" text-anchor="middle">79</text><text x="968.0" y="8.7" text-anchor="middle">80</text><text x="990.5" y="8.7" text-anchor="middle">81</text><text x="1013.0" y="8.7" text-anchor="middle">82</text><text x="1035.5" y="8.7" text-anchor="middle">83</text><text x="1058.0" y="8.7" text-anchor="middle">84</text></g></svg><path d="M51.2 13h11.6l-5.8 6.2z" fill="#000"/></svg></div>
<div id="rulerL" class="abs"><svg width="23" height="593" style="position:absolute;left:0;top:0"><path d="M16 554.5h7M16 532.5h7M16 509.5h7M16 487.5h7M16 464.5h7M16 442.5h7M16 419.5h7M16 397.5h7M16 374.5h7M16 352.5h7M16 329.5h7M16 307.5h7M16 284.5h7M16 262.5h7M16 239.5h7M16 217.5h7M16 194.5h7M16 172.5h7M16 149.5h7M16 127.5h7M16 104.5h7M16 82.5h7M16 59.5h7M16 37.5h7M16 14.5h7" stroke="#6e6e6e" stroke-width="1"/><g font-size="9.8" fill="#111"><text transform="translate(9 575) rotate(-90)" text-anchor="middle">8</text><text transform="translate(9 554.5) rotate(-90)" text-anchor="middle">-7</text><text transform="translate(9 532.0) rotate(-90)" text-anchor="middle">-6</text><text transform="translate(9 509.5) rotate(-90)" text-anchor="middle">-5</text><text transform="translate(9 487.0) rotate(-90)" text-anchor="middle">-4</text><text transform="translate(9 464.5) rotate(-90)" text-anchor="middle">-3</text><text transform="translate(9 442.0) rotate(-90)" text-anchor="middle">-2</text><text transform="translate(9 419.5) rotate(-90)" text-anchor="middle">-1</text><text transform="translate(9 397.0) rotate(-90)" text-anchor="middle">0</text><text transform="translate(9 374.5) rotate(-90)" text-anchor="middle">1</text><text transform="translate(9 352.0) rotate(-90)" text-anchor="middle">2</text><text transform="translate(9 329.5) rotate(-90)" text-anchor="middle">3</text><text transform="translate(9 307.0) rotate(-90)" text-anchor="middle">4</text><text transform="translate(9 284.5) rotate(-90)" text-anchor="middle">5</text><text transform="translate(9 262.0) rotate(-90)" text-anchor="middle">6</text><text transform="translate(9 239.5) rotate(-90)" text-anchor="middle">7</text><text transform="translate(9 217.0) rotate(-90)" text-anchor="middle">8</text><text transform="translate(9 194.5) rotate(-90)" text-anchor="middle">9</text><text transform="translate(9 172.0) rotate(-90)" text-anchor="middle">10</text><text transform="translate(9 149.5) rotate(-90)" text-anchor="middle">11</text><text transform="translate(9 127.0) rotate(-90)" text-anchor="middle">12</text><text transform="translate(9 104.5) rotate(-90)" text-anchor="middle">13</text><text transform="translate(9 82.0) rotate(-90)" text-anchor="middle">14</text><text transform="translate(9 59.5) rotate(-90)" text-anchor="middle">15</text><text transform="translate(9 37.0) rotate(-90)" text-anchor="middle">16</text><text transform="translate(9 14.5) rotate(-90)" text-anchor="middle">17</text></g><path d="M13 33.0v12l6.5-6z" fill="#000"/></svg></div>
<div id="canvas" class="abs"><svg width="1044" height="577" style="position:absolute;left:0;top:0"><defs><pattern id="dots" patternUnits="userSpaceOnUse" x="0" y="37" width="45" height="45"><path d="M0 0h1v1h-1zM22 0h1v1h-1zM0 22h1v1h-1zM22 22h1v1h-1z" fill="#4d4d4d"/></pattern></defs><path d="M45.0 0V577M270.0 0V577M495.0 0V577M720.0 0V577M945.0 0V577M0 397.0H1044M0 172.0H1044" stroke="#141414" stroke-width="1.4"/><rect width="1044" height="577" fill="url(#dots)"/><g transform="translate(-95 -155)" fill="none" stroke="#f4f4f4" stroke-width="1.3"><path d="M275.0 552.0L365.0 327.0"/><path d="M410 552A144.7 144.7 0 0 1 500 327"/><circle cx="612.5" cy="439.5" r="112.5"/><ellipse cx="815.0" cy="439.5" rx="36" ry="112.5"/><path d="M905.0 552.0 L912.5 548.9 L919.3 545.6 L925.4 542.1 L930.9 538.3 L935.7 534.4 L939.9 530.4 L943.6 526.3 L946.8 522.0 L949.5 517.7 L951.8 513.3 L953.7 509.0 L955.3 504.6 L956.5 500.3 L957.4 496.0 L958.1 491.9 L958.6 487.8 L959.0 483.9 L959.2 480.1 L959.3 476.5 L959.4 473.2 L959.4 470.1 L959.4 467.2 L959.4 464.5 L959.4 462.0 L959.4 459.7 L959.3 457.5 L959.2 455.5 L959.2 453.7 L959.1 452.0 L958.9 450.4 L958.8 449.0 L958.7 447.6 L958.6 446.4 L958.4 445.2 L958.3 444.1 L958.2 443.0 L958.0 442.0 L957.9 441.0 L957.7 440.0 L957.6 439.0 L957.5 438.1 L957.3 437.1 L957.2 436.0 L957.1 435.0 L957.0 433.9 L956.9 432.7 L956.8 431.5 L956.7 430.2 L956.6 428.8 L956.6 427.3 L956.5 425.7 L956.4 424.0 L956.4 422.1 L956.4 420.1 L956.3 418.0 L956.3 415.7 L956.3 413.2 L956.3 410.5 L956.3 407.7 L956.4 404.6 L956.4 401.3 L956.5 397.9 L956.7 394.3 L957.1 390.5 L957.5 386.6 L958.2 382.6 L959.0 378.5 L960.1 374.3 L961.4 370.0 L963.0 365.7 L965.0 361.4 L967.2 357.0 L969.9 352.6 L972.9 348.2 L976.4 343.9 L980.3 339.5 L984.7 335.3 L989.6 331.1 L995.0 327.0"/></g></svg></div>
<div id="vscroll" class="abs"><div class="abs" style="left:4px;top:130px;width:8px;height:320.5px;border-radius:4px;background:#7f7f7f"></div></div>
<div id="hscroll" class="abs"><div class="abs" style="left:0;top:0;width:23px;height:15px;background:#ececec"></div><div class="abs" style="left:1027px;top:0;width:54px;height:15px;background:#ebebeb;font-size:13.5px;text-align:right;line-height:17px;color:#111;letter-spacing:-0.6px;padding-right:.5px">1 &lt; 10</div><div class="abs" style="left:171px;top:4px;width:684px;height:8px;border-radius:4px;background:#7f7f7f"></div></div>
<div id="cmdhist" class="abs"><span class="abs" style="left:5px;top:0px;font-size:13.3px;color:#0808e0"><i>Comando:</i> offset</span><div class="abs" style="left:1067px;top:0;width:14px;height:20px;background:#f7f7f7"><div class="abs" style="left:3px;top:0px;width:8px;height:17px;border-radius:4px;background:#7d7d7d"></div></div></div>
<div id="cmdline" class="abs"><span class="abs" style="left:1px;top:7px;font-size:13.2px;color:#111">Scegli linea, arco, cerchio, ellisse, spline o polilinea:</span><div class="abs" style="left:308px;top:4px;width:747px;height:19px;background:#fff"></div>
<div class="abs" style="left:1055px;top:1px;width:26px;height:26px;border:1px solid #b0b0b0;background:linear-gradient(#f4f4f4,#e0e0e0)"><svg width="24" height="24"><rect x="5.5" y="7.5" width="14" height="10" fill="#f8f8f8" stroke="#333"/><rect x="5" y="7" width="15" height="3" fill="#000"/><rect x="16" y="8" width="1" height="1" fill="#fff"/></svg></div></div>
<div id="vstrip" class="abs" style="left:1153px;top:108px;width:3px;height:690px;background:linear-gradient(90deg,#e6e6e6,#cfcfcf)"></div>
<div id="layers" class="abs"><svg width="300" height="690" viewBox="1154 108 300 690" style="position:absolute;left:-1px;top:0">
<defs><linearGradient id="gTitle" x1="0" y1="0" x2="0" y2="1"><stop offset="0" stop-color="#ececec"/><stop offset="1" stop-color="#d6d6d6"/></linearGradient>
<linearGradient id="gHdr" x1="0" y1="0" x2="0" y2="1"><stop offset="0" stop-color="#e8e8e8"/><stop offset=".5" stop-color="#f2f2f2"/><stop offset="1" stop-color="#f4f4f4"/></linearGradient>
<g id="eye0"><path d="M-7 0C-4.5-4.5 4.5-4.5 7 0 4.5 4.5-4.5 4.5-7 0Z" fill="#000"/><path d="M-4.3 .3C-2.5-2.8 2.5-2.8 4.3 .3 2.5 3.3-2.5 3.3-4.3 .3Z" fill="#fff"/><circle cx="0" cy="-.3" r="2.6" fill="#000"/><circle cx="-.8" cy="-1.2" r=".7" fill="#666"/></g>
<g id="pencil"><path d="M0 0l1.6-4.5 10-10 3 3-10 10z" fill="#e8b040" stroke="#8a6010" stroke-width=".7"/><path d="M11.6-14.5l1.8-1.8 3 3-1.8 1.8z" fill="#e02020" stroke="#901010" stroke-width=".6"/><path d="M0 0l1.6-4.5 2.8 2.8z" fill="#f4e0b0"/><path d="M0 0l.6-1.6 1 1z" fill="#333"/></g>
<g id="lock"><path d="M-3.2-1.5V-3.5a3.2 3.2 0 0 1 6.4 0V-1.5" fill="none" stroke="#bdbdbd" stroke-width="1.6"/><rect x="-4.9" y="-1.5" width="9.8" height="8" fill="#bdbdbd"/></g>
<g id="eye"><use href="#eye0" transform="scale(1.2 1.25)"/></g></defs>
<rect x="1154" y="108" width="300" height="690" fill="#fff"/>
<rect x="1154" y="108" width="300" height="21" fill="url(#gTitle)"/>
<path d="M1154 107.5H1454" stroke="#bcbcbc"/>
<circle cx="1164" cy="118" r="7" fill="#707070"/><path d="M1161 115l6 6M1167 115l-6 6" stroke="#fff" stroke-width="1.7"/>
<circle cx="1182" cy="118" r="7" fill="#707070"/><rect x="1181" y="114" width="5" height="4" fill="none" stroke="#fff" stroke-width="1.1"/><rect x="1178" y="117" width="5" height="4" fill="#707070" stroke="#fff" stroke-width="1.1"/>
<text x="1322.5" y="123" font-family="Liberation Sans" font-size="12" fill="#2a2a2a" text-anchor="middle">Elenco dei livelli</text>
<rect x="1154" y="129" width="300" height="28" fill="#b0b0b0"/>
<rect x="1156" y="131" width="58.5" height="24" fill="url(#gHdr)"/>
<rect x="1216" y="131" width="58.5" height="24" fill="url(#gHdr)"/>
<rect x="1276" y="131" width="58.5" height="24" fill="url(#gHdr)"/>
<rect x="1336" y="131" width="58.5" height="24" fill="url(#gHdr)"/>
<rect x="1396" y="131" width="58" height="24" fill="url(#gHdr)"/>
<path d="M1154 129.5H1454" stroke="#c0c0c0"/>
<use href="#eye" x="1185" y="142.7"/>
<g opacity=".32"><use href="#eye" x="1245" y="142.7"/></g>
<path d="M1304.5 137v11M1299 142.5h11" stroke="#e00000" stroke-width="2.8"/>
<path d="M1359 142.5h11" stroke="#e00000" stroke-width="2.8"/>
<use href="#pencil" x="1418.4" y="149.5"/>
<rect x="1161.5" y="163.5" width="14.5" height="8" fill="#fff" stroke="#111"/>
<rect x="1161.5" y="183" width="14.5" height="8" fill="#f00" stroke="#111"/>
<text x="1182.5" y="171.5" font-family="Liberation Sans" font-size="14" fill="#000">0</text>
<text x="1182.5" y="191.5" font-family="Liberation Sans" font-size="14" fill="#000">Offset</text>
<use href="#eye" x="1423" y="166.7"/><use href="#eye" x="1423" y="186.4"/>
<use href="#lock" x="1445" y="166.5"/><use href="#lock" x="1445" y="186"/>
<use href="#pencil" x="1394.5" y="193.5" transform="scale(1)"/>

</svg></div>
<div id="dock" class="abs"><svg width="47" height="690" viewBox="1453 108 47 690" style="position:absolute;left:0;top:0">
<defs><linearGradient id="gDock" x1="0" y1="0" x2="1" y2="0"><stop offset="0" stop-color="#f0f0f0"/><stop offset="1" stop-color="#c6c6c6"/></linearGradient>
<g id="win"><rect x=".5" y=".5" width="27" height="27" fill="#fff" stroke="#111"/><rect x="0" y="0" width="28" height="4.8" fill="#000"/><rect x="1.8" y="1.2" width="2.6" height="2.6" fill="#fff"/></g></defs>
<rect x="1453" y="108" width="47" height="690" fill="url(#gDock)"/>
<path d="M1455 108V798" stroke="#c0c0c0" stroke-width="1.5"/>
<g fill="#9a9a9a"><rect x="1462" y="116" width="1.6" height="1.6"/><rect x="1467.5" y="116" width="1.6" height="1.6"/><rect x="1473" y="116" width="1.6" height="1.6"/><rect x="1478.5" y="116" width="1.6" height="1.6"/><rect x="1484" y="116" width="1.6" height="1.6"/></g>
<rect x="1456.2" y="120.8" width="42.7" height="41.6" rx="4.5" fill="#b9b9b9"/>
<rect x="1456.2" y="417" width="42.7" height="42.3" rx="4.5" fill="#b9b9b9"/>
<path d="M1458 261H1500M1458 409.5H1500" stroke="#555" stroke-dasharray="1 2"/>
<use href="#win" x="1463" y="127"/>
<path d="M1472 139l6-3v10l-6 3z" fill="#bbb" stroke="#444" stroke-width=".7"/><path d="M1475 137.5l7-3v10l-7 3z" fill="#fff" stroke="#444" stroke-width=".7"/><path d="M1476.5 145l4-6 .5 5z" fill="none" stroke="#e03030" stroke-width=".7"/>
<use href="#win" x="1463" y="174"/>
<rect x="1469" y="182" width="10.5" height="8" fill="#f4eccc" stroke="#555" stroke-width=".8"/><circle cx="1479.5" cy="190.5" r="4.3" fill="#f4eccc" stroke="#555" stroke-width=".8"/>
<use href="#win" x="1463" y="220.2"/>
<rect x="1468.5" y="230" width="17" height="12" rx="2.5" fill="#f4f4f4" stroke="#c4d4ee" stroke-width="1"/>
<use href="#win" x="1463" y="275.7"/>
<g fill="#111"><rect x="1467" y="284" width="3" height="2.5"/><rect x="1467" y="289" width="3" height="2.5"/><rect x="1467" y="294" width="3" height="2.5"/></g>
<path d="M1472.5 284.5h13v2h-13zM1472.5 289.5h13v2h-13zM1472.5 294.5h13v2h-13z" fill="#fff" stroke="#222" stroke-width=".7"/>
<use href="#win" x="1463" y="322"/>
<path d="M1469 331h16l-6 6v7l-4 2v-9z" fill="#aaa" stroke="#666" stroke-width=".6"/>
<use href="#win" x="1463" y="368.5"/>
<path d="M1469.5 377v13l7-4v-5z" fill="#fff" stroke="#555" stroke-width=".8"/><rect x="1476" y="380" width="8" height="7" fill="#999"/><path d="M1468 383.5h18" stroke="#f08080" stroke-width=".7" stroke-dasharray="1 1"/>
<use href="#win" x="1463" y="424"/>
<g fill="#999"><rect x="1466" y="432" width="8" height=".8"/><rect x="1466" y="435" width="9" height=".8"/><rect x="1466" y="438" width="10" height=".8"/><rect x="1466" y="441" width="10" height=".8"/><rect x="1466" y="445.5" width="21" height=".8"/></g>
<path d="M1463.5 446.5h27" stroke="#111" stroke-width=".8"/>
<use href="#win" x="1463" y="471.2"/>
<rect x="1471" y="480" width="12" height="15" rx="1" fill="#c89040" stroke="#8a6010" stroke-width=".6"/><rect x="1473" y="482" width="8" height="11" fill="#f4f4f4"/><rect x="1474.5" y="478.5" width="5" height="3" fill="#888"/>
</svg></div>
<div id="status" class="abs" style="font-size:9.8px;color:#111">
<span class="abs" style="left:2px;top:8px">39.5111,15.9111</span>
<span class="abs" style="left:2px;top:28px">@39.5111,15.9111</span>
<div class="abs" style="left:253.5px;top:4px;width:1px;height:41px;background:#a0a0a0"></div>
<span class="abs" style="left:256px;top:8px">42.5945&lt;22°</span>
<span class="abs" style="left:256px;top:28px">@42.5945&lt;22°</span>
<div class="abs" style="left:505px;top:19px;width:6px;height:6px;border-radius:3px;background:#c4c4c4"></div>
<span class="abs" style="left:510px;top:12px;text-align:right;line-height:11px;width:195px;letter-spacing:.12px;white-space:normal">Scegli linea, arco, cerchio, ellisse, spline o<br>polilinea</span>
<svg class="abs" style="left:720px;top:7px" width="24" height="32"><path d="M12 1.5C6 1.5 2.5 5.5 2.5 11V21C2.5 26.5 6 30.5 12 30.5S21.5 26.5 21.5 21V11C21.5 5.5 18 1.5 12 1.5Z" fill="#fff" stroke="#333" stroke-width="1"/><path d="M2.5 14H21.5M12 1.5V14" stroke="#333" stroke-width="1"/><rect x="10" y="4" width="4" height="7" rx="2" fill="#fff" stroke="#333" stroke-width="1"/></svg>
<span class="abs" style="left:760px;top:18px">Annulla</span>
<div class="abs" style="left:939px;top:19px;width:6px;height:6px;border-radius:3px;background:#c4c4c4"></div>
<span class="abs" style="left:948.5px;top:18px;letter-spacing:.1px">Nessun entità selezionate.</span>
<div class="abs" style="left:1268px;top:19px;width:7px;height:7px;border-radius:4px;background:#c8c8c8"></div>
</div>
<svg class="abs" style="left:140px;top:40px" width="100" height="100" viewBox="140 40 100 100">
<circle cx="189.5" cy="88" r="37.3" fill="none" stroke="#98b0c8" stroke-opacity=".6" stroke-width="3.2"/>
<circle cx="189.5" cy="88" r="34.6" fill="none" stroke="#a8bcd2" stroke-opacity=".3" stroke-width="2.2"/>
<circle cx="189.5" cy="88" r="32" fill="none" stroke="#b8c8dc" stroke-opacity=".15" stroke-width="2.5"/>
<path d="M190.2 88.1L190.2 109.4L195.3 104.5L200.6 114.3L203.9 112.9L199.7 103.4L204.8 102.8Z" fill="#fff" stroke="#fff" stroke-width="3" stroke-linejoin="round"/>
<path d="M190.2 88.1L190.2 109.4L195.3 104.5L200.6 114.3L203.9 112.9L199.7 103.4L204.8 102.8Z" fill="#fff" stroke="#000" stroke-width="1.1" stroke-linejoin="miter"/>
</svg>
</body></html>
